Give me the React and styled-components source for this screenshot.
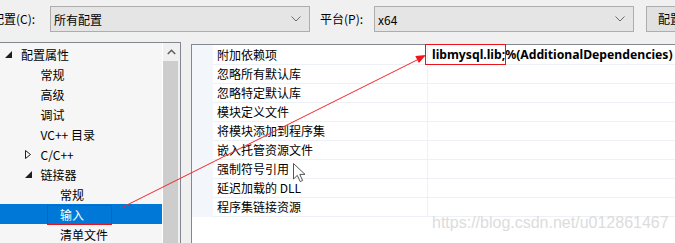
import React from 'react'
import styled, { createGlobalStyle } from 'styled-components'

const GlobalStyle = createGlobalStyle`
  html, body {
    margin: 0;
    padding: 0;
  }
  body {
    width: 675px;
    height: 243px;
    overflow: hidden;
    background: #f0f0f0;
    font-family: "Noto Sans CJK SC", "Noto Sans", sans-serif;
    font-size: 12px;
    color: #000;
  }
`

const Page = styled.div`
  position: relative;
  width: 675px;
  height: 243px;
  overflow: hidden;
`

const Toolbar = styled.div`
  display: flex;
  align-items: center;
  height: 26px;
  padding-top: 6px;
  margin-left: -8px;
  white-space: nowrap;
`

const Label = styled.div`
  width: ${p => p.width}px;
  flex: none;
  line-height: 26px;
`

const Combo = styled.div`
  flex: none;
  box-sizing: border-box;
  width: 260px;
  height: 26px;
  display: flex;
  align-items: center;
  justify-content: space-between;
  padding: 0 8px 0 3px;
  border: 1px solid #adadad;
  background: #e5e5e5;
  margin-right: ${p => p.gap}px;
`

const Button = styled.div`
  flex: none;
  box-sizing: border-box;
  height: 26px;
  width: 100px;
  padding-left: 11px;
  line-height: 24px;
  border: 1px solid #adadad;
  background: #e1e1e1;
`

const Main = styled.div`
  display: flex;
  align-items: flex-start;
  margin-top: 10px;
`

const TreePanel = styled.div`
  flex: none;
  box-sizing: border-box;
  width: 182px;
  height: 220px;
  margin-left: -1px;
  border: 1px solid #828790;
  background: #f6f6f6;
  display: flex;
`

const TreeList = styled.div`
  flex: 1;
  padding-top: 1px;
`

const TreeRow = styled.div`
  height: 20px;
  display: flex;
  align-items: center;
  padding-left: ${p => 5 + p.level * 19.5}px;
  background: ${p => (p.selected ? '#0078d7' : 'transparent')};
  color: ${p => (p.selected ? '#fff' : '#000')};
  white-space: nowrap;
`

const Toggle = styled.span`
  width: 16px;
  flex: none;
  display: flex;
  align-items: center;
`

const Scrollbar = styled.div`
  flex: none;
  width: 17px;
  border-left: 1px solid #fff;
  background: #f0f0f0;
  display: flex;
  flex-direction: column;
`

const ScrollArrow = styled.div`
  height: 18px;
  display: flex;
  align-items: center;
  justify-content: center;
`

const Thumb = styled.div`
  flex: 1;
  margin-right: 2px;
  background: #cdcdcd;
`

const GridPanel = styled.div`
  flex: 1;
  box-sizing: border-box;
  height: 220px;
  margin-top: 2px;
  margin-left: 10px;
  border-left: 1px solid #828790;
  border-top: 1px solid #828790;
  background: #fff;
`

const Grid = styled.div`
  display: flex;
`

const Gutter = styled.div`
  flex: none;
  width: 21px;
  background: #f3f6fb;
`

const Rows = styled.div`
  flex: 1;
  padding-top: 1px;
`

const Row = styled.div`
  box-sizing: border-box;
  height: 19px;
  display: grid;
  grid-template-columns: 214px 1fr;
  border-bottom: 1px solid #edf0f5;
  white-space: nowrap;
`

const NameCell = styled.div`
  padding-left: 4px;
  line-height: 18px;
`

const ValueCell = styled.div`
  border-left: 1px solid #edf0f5;
  padding-left: 4px;
  line-height: 18px;
  font-family: "Noto Sans", "Noto Sans CJK SC", sans-serif;
  font-weight: bold;
  font-size: 12.2px;
  overflow: hidden;
`

const Watermark = styled.div`
  position: absolute;
  left: 432px;
  top: 214px;
  font-family: "Liberation Sans", Arial, sans-serif;
  font-size: 16px;
  color: #dcdcdc;
  white-space: nowrap;
`

const Overlay = styled.svg`
  position: absolute;
  left: 0;
  top: 0;
`

const Chevron = () => (
  <svg width="10" height="6" viewBox="0 0 10 6">
    <polyline points="0.5,0.5 5,5 9.5,0.5" fill="none" stroke="#6a6a6a" strokeWidth="1" />
  </svg>
)

const Expanded = () => (
  <svg width="7" height="7" viewBox="0 0 7 7">
    <polygon points="7,0 7,7 0,7" fill="#1e1e1e" />
  </svg>
)

const Collapsed = () => (
  <svg width="6" height="9" viewBox="0 0 6 9">
    <polygon points="0.5,0.5 5.5,4.5 0.5,8.5" fill="none" stroke="#1e1e1e" strokeWidth="1" />
  </svg>
)

const tree = [
  { label: '配置属性', level: 0, toggle: 'open' },
  { label: '常规', level: 1 },
  { label: '高级', level: 1 },
  { label: '调试', level: 1 },
  { label: 'VC++ 目录', level: 1 },
  { label: 'C/C++', level: 1, toggle: 'closed' },
  { label: '链接器', level: 1, toggle: 'open' },
  { label: '常规', level: 2 },
  { label: '输入', level: 2, selected: true },
  { label: '清单文件', level: 2 }
]

const props = [
  ['附加依赖项', 'libmysql.lib;%(AdditionalDependencies)'],
  ['忽略所有默认库', ''],
  ['忽略特定默认库', ''],
  ['模块定义文件', ''],
  ['将模块添加到程序集', ''],
  ['嵌入托管资源文件', ''],
  ['强制符号引用', ''],
  ['延迟加载的 DLL', ''],
  ['程序集链接资源', '']
]

export default function App() {
  return (
    <Page>
      <GlobalStyle />
      <Toolbar>
        <Label width={58}>配置(C):</Label>
        <Combo gap={10}>
          <span>所有配置</span>
          <Chevron />
        </Combo>
        <Label width={54}>平台(P):</Label>
        <Combo gap={12}>
          <span>x64</span>
          <Chevron />
        </Combo>
        <Button>配置管理器(O)...</Button>
      </Toolbar>

      <Main>
        <TreePanel>
          <TreeList>
            {tree.map((item, i) => (
              <TreeRow key={i} level={item.level} selected={item.selected}>
                <Toggle>
                  {item.toggle === 'open' && <Expanded />}
                  {item.toggle === 'closed' && <Collapsed />}
                </Toggle>
                {item.label}
              </TreeRow>
            ))}
          </TreeList>
          <Scrollbar>
            <ScrollArrow>
              <svg width="9" height="6" viewBox="0 0 9 6">
                <polyline points="0.8,5 4.5,1.3 8.2,5" fill="none" stroke="#606060" strokeWidth="1.6" />
              </svg>
            </ScrollArrow>
            <Thumb />
          </Scrollbar>
        </TreePanel>

        <GridPanel>
          <Grid>
            <Gutter />
            <Rows>
              {props.map(([name, value], i) => (
                <Row key={i}>
                  <NameCell>{name}</NameCell>
                  <ValueCell>{value}</ValueCell>
                </Row>
              ))}
            </Rows>
          </Grid>
        </GridPanel>
      </Main>

      <Watermark>https://blog.csdn.net/u012861467</Watermark>

      <Overlay width="675" height="243" viewBox="0 0 675 243">
        <rect x="425.5" y="44.5" width="80" height="20" fill="none" stroke="#e8141b" strokeWidth="1" />
        <rect x="47.5" y="205.5" width="64" height="19" fill="none" stroke="#e8141b" strokeWidth="1" />
        <line x1="121" y1="208" x2="418" y2="59.5" stroke="#f0262b" strokeWidth="1" />
        <polygon points="426,55 418.9,63.1 415.3,55.9" fill="#f0141b" />
        <path
          d="M293.5 163.5 L293.5 179 L297.3 175.4 L300.2 181.6 L302.6 180.5 L299.8 174.4 L305 174.4 Z"
          fill="#fff"
          stroke="#555"
          strokeWidth="1"
          strokeLinejoin="round"
        />
      </Overlay>
    </Page>
  )
}
